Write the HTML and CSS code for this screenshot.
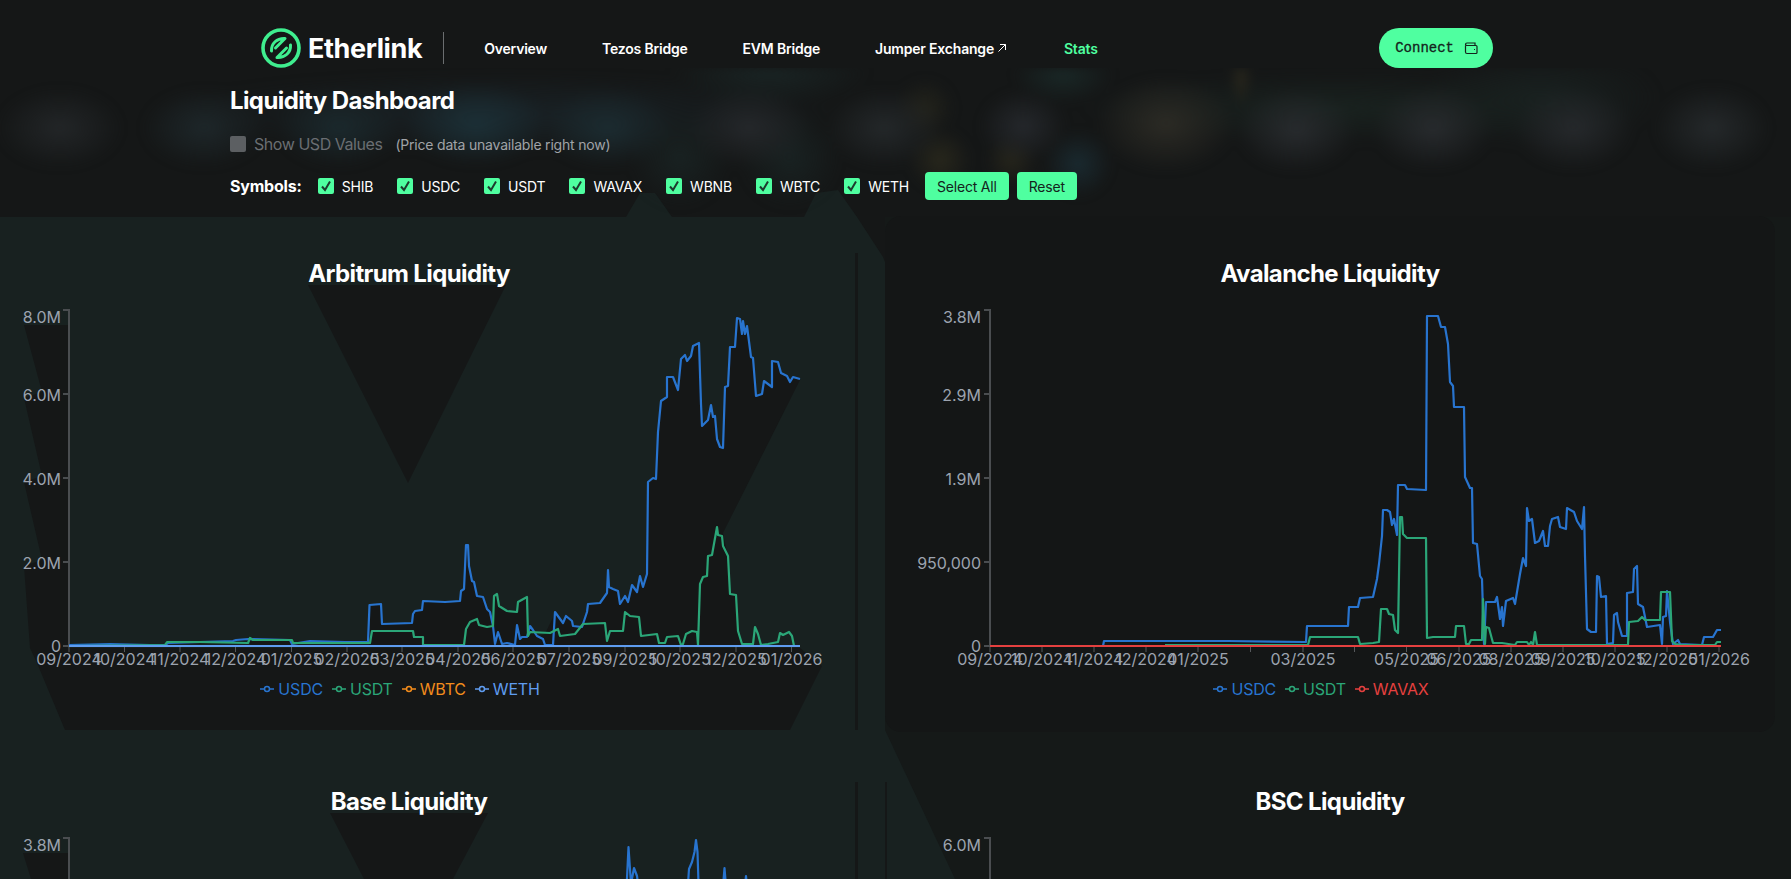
FILE: index.html
```html
<!DOCTYPE html>
<html lang="en">
<head>
<meta charset="utf-8">
<title>Etherlink Liquidity Dashboard</title>
<link rel="stylesheet" href="styles.css">
</head>
<body>
<div class="backdrop">
  <svg class="backdrop-art" viewBox="0 0 1791 879" width="1791" height="879" aria-hidden="true">
    <rect class="lower" x="885" y="217" width="906" height="662"/>
    <polygon class="teal" points="0,217 626,217 640,193 655,193 672,217 804,217 816,193 838,190 857,217 883,257 885,262 885,730 955,879 0,879"/>
    <polygon class="dark" points="308,285 506,285 408,483"/>
    <polygon class="dark" points="330,813 488,813 453,879 364,879"/>
    <polygon class="dark" points="24,325 68,325 68,648 800,648 822,666 790,730 65,730 37,663 30,648 24,566 42,560 24,482 42,476 24,398 42,392"/>
    <polygon class="dark" points="23,853 68,853 68,879 31,879"/>
    <polygon class="dark" points="250,647 250,639 253,641 292,641 293,647"/>
    <polygon class="dark" points="369,647 369.5,606 381,605 382,625 412,624 413,615 415,612 422,611 423,602 445,603 460,602 461,592 464,590 466,546 468,546 469,567 472,582 474,583 477,597 483,598 487,610 490,613 493,627 494,597 497,595 499,607 507,612 517,613 518,603 527,598 528,637 530,627 533,631 537,637 545,634 555,613 563,624 566,617 572,622 573,627 582,628 587,613 588,605 600,604 607,594 608,571 609,588 613,590 618,592 620,605 625,597 628,603 632,586 637,593 640,577 643,588 647,575 648,483 653,479 656,480 658,433 661,402 667,398 667,378 673,378 678,391 681,360 685,356 687,362 691,357 693,347 699,344 701,405 702,427 708,421 711,406 713,418 715,417 717,440 720,448 723,449 725,388 728,387 730,348 735,348 737,319 740,320 742,335 743,322 745,335 747,327 751,358 753,359 756,397 762,395 764,382 772,388 772,362 778,363 781,374 787,377 790,383 793,378 800,380 723,533 728,557 730,595 736,596 738,632 742,647"/>
    <rect class="dark" x="855" y="253" width="3" height="477"/>
    <rect class="dark" x="855" y="782" width="3" height="97"/>
    <rect class="dark" x="885" y="782" width="2" height="97"/>
  </svg>
  <div class="haze"></div>
</div>

<header class="topbar">
  <a class="brand" href="#">
    <svg class="brand-mark" viewBox="0 0 40 40" width="40" height="40" aria-hidden="true">
      <circle cx="20" cy="20" r="18" fill="none" stroke="#3fee8f" stroke-width="3.6"/>
      <path d="M10.5 23 C10 15.5 16 10 24 10.5 L14.5 20" fill="none" stroke="#3fee8f" stroke-width="3" stroke-linecap="round" stroke-linejoin="round"/>
      <path d="M29.5 17 C30 24.5 24 30 16 29.5 L25.5 20" fill="none" stroke="#3fee8f" stroke-width="3" stroke-linecap="round" stroke-linejoin="round"/>
    </svg>
    <span class="brand-name">Etherlink</span>
  </a>
  <span class="divider"></span>
  <nav class="links">
    <a href="#">Overview</a>
    <a href="#">Tezos Bridge</a>
    <a href="#">EVM Bridge</a>
    <a href="#" class="external">Jumper Exchange
      <svg viewBox="0 0 10 10" width="10" height="10" aria-hidden="true"><path d="M1.5 8.5 L8.5 1.5 M3 1.5 H8.5 V7" fill="none" stroke="#fff" stroke-width="1"/></svg>
    </a>
    <a href="#" class="active">Stats</a>
  </nav>
  <button class="connect">Connect
    <svg viewBox="0 0 16 16" width="16" height="16" aria-hidden="true"><path d="M2.5 5.5 V12 A1.5 1.5 0 0 0 4 13.5 H13 A1 1 0 0 0 14 12.5 V6.5 A1 1 0 0 0 13 5.5 H4 A1.5 1.5 0 0 1 2.5 4.5 A1.5 1.5 0 0 1 4 3 H12 V5.5 M11 9.5 H12" fill="none" stroke="#14241c" stroke-width="1.2"/></svg>
  </button>
</header>

<main class="page">
  <section class="intro">
    <h1>Liquidity Dashboard</h1>
    <div class="usd-row">
      <span class="box box-off"></span>
      <span class="usd-label">Show USD Values</span>
      <span class="usd-note">(Price data unavailable right now)</span>
    </div>
    <div class="symbols">
      <strong class="symbols-title">Symbols:</strong>
      <label class="symbol"><span class="box"><svg viewBox="0 0 16 16" width="16" height="16"><path d="M4 8.5 L7 12 L12 3.5"/></svg></span>SHIB</label>
      <label class="symbol"><span class="box"><svg viewBox="0 0 16 16" width="16" height="16"><path d="M4 8.5 L7 12 L12 3.5"/></svg></span>USDC</label>
      <label class="symbol"><span class="box"><svg viewBox="0 0 16 16" width="16" height="16"><path d="M4 8.5 L7 12 L12 3.5"/></svg></span>USDT</label>
      <label class="symbol"><span class="box"><svg viewBox="0 0 16 16" width="16" height="16"><path d="M4 8.5 L7 12 L12 3.5"/></svg></span>WAVAX</label>
      <label class="symbol"><span class="box"><svg viewBox="0 0 16 16" width="16" height="16"><path d="M4 8.5 L7 12 L12 3.5"/></svg></span>WBNB</label>
      <label class="symbol"><span class="box"><svg viewBox="0 0 16 16" width="16" height="16"><path d="M4 8.5 L7 12 L12 3.5"/></svg></span>WBTC</label>
      <label class="symbol"><span class="box"><svg viewBox="0 0 16 16" width="16" height="16"><path d="M4 8.5 L7 12 L12 3.5"/></svg></span>WETH</label>
      <div class="actions">
        <button class="action">Select All</button>
        <button class="action">Reset</button>
      </div>
    </div>
  </section>

  <section class="charts">
    <article class="card">
      <h2>Arbitrum Liquidity</h2>
      <svg class="chart" viewBox="0 300 818 372" width="818" height="372">
        <path class="axis" d="M63 311 H69 V647 M63 395 H69 M63 479 H69 M63 563 H69 M63 647 H69"/>
        <path class="tick" d="M69 647 V653 M124.5 647 V653 M180 647 V653 M235.5 647 V653 M291.5 647 V653 M347 647 V653 M402 647 V653 M458 647 V653 M513 647 V653 M569 647 V653 M625 647 V653 M680 647 V653 M736 647 V653 M791.5 647 V653"/>
        <g class="ylabels">
          <text x="61" y="324">8.0M</text><text x="61" y="401.5">6.0M</text><text x="61" y="485.5">4.0M</text><text x="61" y="569.5">2.0M</text><text x="61" y="653">0</text>
        </g>
        <g class="xlabels">
          <text x="69" y="666">09/2024</text><text x="124.5" y="666">10/2024</text><text x="180" y="666">11/2024</text><text x="235.5" y="666">12/2024</text><text x="291.5" y="666">01/2025</text><text x="347" y="666">02/2025</text><text x="402" y="666">03/2025</text><text x="458" y="666">04/2025</text><text x="513" y="666">06/2025</text><text x="569" y="666">07/2025</text><text x="625" y="666">09/2025</text><text x="680" y="666">10/2025</text><text x="736" y="666">12/2025</text><text x="791.5" y="666">01/2026</text>
        </g>
        <polyline class="series usdc" points="69,646 110,645 150,646 165,646 168,644 200,643 233,642 236,641 248,640 290,641 292,645 310,642 345,643 368,643 369.5,606 381,605 382,625 412,624 413,615 415,612 422,611 423,602 445,603 460,602 461,592 464,590 466,546 468,546 469,567 472,582 474,583 477,597 483,598 487,610 490,613 493,627 495,645 498,633 502,645 507,644 515,646 517,626 520,640 522,638 527,638 530,627 533,631 537,637 543,640 545,646 553,646 555,613 563,624 566,617 572,622 573,627 582,628 587,613 588,605 600,604 607,594 608,571 609,588 613,590 618,592 620,605 625,597 628,603 632,586 637,593 640,577 643,588 647,575 648,483 653,479 656,480 658,433 661,402 667,398 667,378 673,378 678,391 681,360 685,356 687,362 691,357 693,347 699,344 701,405 702,427 708,421 711,406 713,418 715,417 717,440 720,448 723,449 725,388 728,387 730,348 735,348 737,319 740,320 742,335 743,322 745,335 747,327 751,358 753,359 756,397 762,395 764,382 772,388 772,362 778,363 781,374 787,377 790,383 793,378 800,380"/>
        <polyline class="series usdt" points="69,647 165,646 167,643 187,643 200,643 248,644 250,639 253,641 292,641 293,644 370,644 372,632 413,632 414,638 423,638 423,646 464,646 466,630 470,623 477,620 479,626 487,628 493,627 494,597 497,595 499,607 507,612 517,613 518,603 527,598 528,637 530,633 550,634 558,630 560,637 575,635 583,625 605,624 607,642 610,632 623,632 625,613 630,617 639,618 641,637 657,635 659,644 665,644 667,638 678,637 681,646 683,645 686,635 692,632 697,633 698,646 700,585 703,578 707,577 708,557 712,556 717,528 718,536 722,537 723,547 728,557 730,595 736,596 738,632 742,645 753,645 755,628 758,635 761,646 768,645 778,643 780,634 783,636 789,633 792,637 794,647"/>
        <line class="series weth" x1="69" y1="647" x2="800" y2="647"/>
      </svg>
      <ul class="legend">
        <li class="lg-usdc"><svg class="marker" viewBox="0 0 14 8" width="14" height="8"><path d="M0 4 H4.5 M9.5 4 H14"/><circle cx="7" cy="4" r="2.5"/></svg>USDC</li>
        <li class="lg-usdt"><svg class="marker" viewBox="0 0 14 8" width="14" height="8"><path d="M0 4 H4.5 M9.5 4 H14"/><circle cx="7" cy="4" r="2.5"/></svg>USDT</li>
        <li class="lg-wbtc"><svg class="marker" viewBox="0 0 14 8" width="14" height="8"><path d="M0 4 H4.5 M9.5 4 H14"/><circle cx="7" cy="4" r="2.5"/></svg>WBTC</li>
        <li class="lg-weth"><svg class="marker" viewBox="0 0 14 8" width="14" height="8"><path d="M0 4 H4.5 M9.5 4 H14"/><circle cx="7" cy="4" r="2.5"/></svg>WETH</li>
      </ul>
    </article>

    <article class="card card-panel">
      <h2>Avalanche Liquidity</h2>
      <svg class="chart" viewBox="885 300 890 372" width="890" height="372">
        <path class="axis" d="M984 311 H990 V647 M984 395 H990 M984 479 H990 M984 563 H990 M984 647 H990"/>
        <path class="tick" d="M990 647 V653 M1042 647 V653 M1094 647 V653 M1146 647 V653 M1198 647 V653 M1250.5 647 V653 M1303 647 V653 M1354.5 647 V653 M1406.5 647 V653 M1459 647 V653 M1511 647 V653 M1563 647 V653 M1615 647 V653 M1667 647 V653 M1719 647 V653"/>
        <g class="ylabels">
          <text x="981" y="324">3.8M</text><text x="981" y="401.5">2.9M</text><text x="981" y="485.5">1.9M</text><text x="981" y="569.5">950,000</text><text x="981" y="653">0</text>
        </g>
        <g class="xlabels">
          <text x="990" y="666">09/2024</text><text x="1042" y="666">10/2024</text><text x="1094" y="666">11/2024</text><text x="1146" y="666">12/2024</text><text x="1198" y="666">01/2025</text><text x="1303" y="666">03/2025</text><text x="1406.5" y="666">05/2025</text><text x="1459" y="666">06/2025</text><text x="1511" y="666">08/2025</text><text x="1563" y="666">09/2025</text><text x="1615" y="666">10/2025</text><text x="1667" y="666">12/2025</text><text x="1719" y="666">01/2026</text>
        </g>
        <polyline class="series usdc" points="990,647 1103,647 1104,642 1228,642 1306,643 1307,627 1348,627 1349,608 1358,608 1360,599 1373,598 1377,580 1379,565 1382,537 1383,511 1387,511 1390,513 1392,526 1394,520 1397,536 1398,486 1405,486 1407,490 1426,491 1427,317 1438,317 1441,328 1445,328 1448,345 1450,383 1453,387 1454,408 1464,408 1465,478 1470,489 1472,489 1473,544 1477,545 1480,577 1482,580 1484,645 1486,603 1495,603 1497,598 1500,620 1502,608 1503,627 1506,602 1513,599 1515,605 1517,593 1520,575 1523,559 1526,567 1527,509 1529,522 1532,520 1535,544 1539,542 1543,532 1545,547 1548,547 1550,527 1552,520 1558,518 1560,528 1566,530 1567,509 1574,513 1577,522 1582,530 1584,508 1585,557 1587,630 1591,633 1596,633 1597,577 1599,578 1601,598 1606,597 1607,645 1613,644 1614,616 1617,614 1618,623 1622,637 1627,637 1627,594 1633,593 1634,570 1637,567 1638,605 1643,608 1647,628 1660,626 1662,645 1663,618 1666,617 1667,592 1670,623 1673,645 1678,641 1680,645 1702,646 1704,638 1713,638 1717,631 1721,631"/>
        <polyline class="series usdt" points="1165,646 1308,646 1310,638 1358,638 1360,645 1373,644 1379,643 1381,610 1387,610 1389,615 1393,616 1395,631 1398,634 1400,518 1402,518 1403,535 1407,539 1426,539 1427,639 1433,638 1455,638 1456,627 1464,627 1466,645 1469,645 1471,641 1482,641 1483,600 1485,645 1486,628 1489,629 1493,644 1502,644 1515,646 1517,643 1527,643 1529,646 1531,643 1533,646 1535,633 1537,646 1628,646 1629,623 1638,622 1642,618 1645,621 1660,621 1661,593 1670,593 1672,642 1675,645 1682,646 1715,646 1717,643 1721,643"/>
        <line class="series wavax" x1="990" y1="647" x2="1721" y2="647"/>
      </svg>
      <ul class="legend">
        <li class="lg-usdc"><svg class="marker" viewBox="0 0 14 8" width="14" height="8"><path d="M0 4 H4.5 M9.5 4 H14"/><circle cx="7" cy="4" r="2.5"/></svg>USDC</li>
        <li class="lg-usdt"><svg class="marker" viewBox="0 0 14 8" width="14" height="8"><path d="M0 4 H4.5 M9.5 4 H14"/><circle cx="7" cy="4" r="2.5"/></svg>USDT</li>
        <li class="lg-wavax"><svg class="marker" viewBox="0 0 14 8" width="14" height="8"><path d="M0 4 H4.5 M9.5 4 H14"/><circle cx="7" cy="4" r="2.5"/></svg>WAVAX</li>
      </ul>
    </article>

    <article class="card">
      <h2>Base Liquidity</h2>
      <svg class="chart" viewBox="0 828 818 372" width="818" height="372">
        <path class="axis" d="M63 839 H69 V1175"/>
        <g class="ylabels"><text x="61" y="852">3.8M</text></g>
        <polyline class="series usdc" points="626,900 628.5,848 631,885 634,869 637,877 640,900"/>
        <polyline class="series usdc" points="687,900 689,870 692,863 694.5,853 696,841 697.5,853 699,900"/>
        <polyline class="series usdc" points="722,900 724.5,869 727,900"/>
        <polyline class="series usdc" points="744,900 746,877 748,900"/>
      </svg>
    </article>

    <article class="card">
      <h2>BSC Liquidity</h2>
      <svg class="chart" viewBox="885 828 890 372" width="890" height="372">
        <path class="axis" d="M984 839 H990 V1175"/>
        <g class="ylabels"><text x="981" y="852">6.0M</text></g>
      </svg>
    </article>
  </section>
</main>
</body>
</html>
```

FILE: styles.css
```css
* { box-sizing: border-box; }

html, body {
  margin: 0;
  height: 879px;
  overflow: hidden;
}

body {
  position: relative;
  background: #151717;
  color: #fff;
  font-family: Inter, "Liberation Sans", sans-serif;
}

.backdrop {
  position: absolute;
  inset: 0;
  overflow: hidden;
}

.backdrop-art { display: block; }
.backdrop-art .teal { fill: #182120; }
.backdrop-art .dark { fill: #151717; }
.backdrop-art .lower { fill: #151918; }

.haze {
  position: absolute;
  left: 0;
  top: 68px;
  width: 1791px;
  height: 149px;
  filter: blur(5px);
  background:
    radial-gradient(ellipse 62px 40px at 60px 60px, #232628, rgba(35, 38, 40, 0)),
    radial-gradient(ellipse 62px 40px at 204px 60px, #1e272a, rgba(30, 39, 42, 0)),
    radial-gradient(ellipse 62px 40px at 339px 60px, #1b292d, rgba(27, 41, 45, 0)),
    radial-gradient(ellipse 72px 42px at 476px 56px, #1c3037, rgba(28, 48, 55, 0)),
    radial-gradient(ellipse 66px 40px at 608px 60px, #1c2c31, rgba(28, 44, 49, 0)),
    radial-gradient(ellipse 62px 40px at 749px 60px, #25282b, rgba(37, 40, 43, 0)),
    radial-gradient(ellipse 58px 40px at 884px 60px, #24282a, rgba(36, 40, 42, 0)),
    radial-gradient(ellipse 44px 36px at 1023px 58px, #25282c, rgba(37, 40, 44, 0)),
    radial-gradient(ellipse 70px 48px at 1166px 56px, #2c2b25, rgba(44, 43, 37, 0)),
    radial-gradient(ellipse 60px 42px at 1296px 62px, #282b2e, rgba(40, 43, 46, 0)),
    radial-gradient(ellipse 60px 42px at 1433px 60px, #282b2e, rgba(40, 43, 46, 0)),
    radial-gradient(ellipse 60px 42px at 1574px 60px, #26292c, rgba(38, 41, 44, 0)),
    radial-gradient(ellipse 58px 42px at 1712px 60px, #25292b, rgba(37, 41, 43, 0)),
    radial-gradient(circle 32px at 940px 92px, #28271c, rgba(40, 39, 28, 0)),
    radial-gradient(circle 26px at 1011px 92px, #26251b, rgba(38, 37, 27, 0)),
    radial-gradient(circle 34px at 1078px 96px, #1a2a30, rgba(26, 42, 48, 0)),
    radial-gradient(circle 30px at 925px 40px, #23231b, rgba(35, 35, 27, 0)),
    radial-gradient(circle 50px at 680px 90px, #192222, rgba(25, 34, 34, 0)),
    radial-gradient(circle 50px at 790px 90px, #192222, rgba(25, 34, 34, 0)),
    radial-gradient(ellipse 12px 30px at 1241px 10px, #28261c, rgba(40, 38, 28, 0)),
    radial-gradient(ellipse 100px 40px at 770px 0, #1a2525, rgba(26, 37, 37, 0)),
    radial-gradient(ellipse 50px 30px at 1063px 6px, #1a2827, rgba(26, 40, 39, 0)),
    radial-gradient(ellipse 340px 40px at 500px 45px, #192125, rgba(25, 33, 37, 0)),
    radial-gradient(ellipse 260px 36px at 1340px 40px, #19221f, rgba(25, 34, 31, 0)),
    radial-gradient(ellipse 120px 50px at 1540px 30px, #192120, rgba(25, 33, 32, 0));
}

.topbar {
  position: relative;
  z-index: 1;
  display: flex;
  align-items: center;
  height: 68px;
  padding: 28px 298px 0 261px;
  background: #151717;
}

.brand {
  display: flex;
  align-items: center;
  gap: 7px;
  color: #fff;
  text-decoration: none;
}

.brand-mark { display: block; }

.brand-name {
  font-size: 27px;
  font-weight: 700;
  letter-spacing: -0.4px;
}

.divider {
  width: 1px;
  height: 32px;
  margin: 0 40px 0 21px;
  background: #6b6e70;
}

.links {
  display: flex;
  align-items: center;
  gap: 55px;
  font-size: 14px;
  font-weight: 600;
  letter-spacing: -0.2px;
}

.links a {
  color: #fff;
  text-decoration: none;
}

.links .external {
  display: flex;
  align-items: center;
  gap: 3px;
  margin-right: 2px;
}

.links .active { color: #4fffa0; }

.connect {
  display: flex;
  align-items: center;
  gap: 9px;
  height: 40px;
  margin-left: auto;
  padding: 0 14px 0 16px;
  border: 0;
  border-radius: 20px;
  background: #4fffa0;
  color: #14241c;
  font-family: "Liberation Mono", monospace;
  font-size: 14px;
  font-weight: 400;
  -webkit-text-stroke: 0.3px #14241c;
}

.page {
  position: relative;
  z-index: 1;
}

.intro {
  padding: 17px 0 16px 230px;
}

h1 {
  margin: 0;
  font-size: 24px;
  font-weight: 700;
  line-height: 32px;
  letter-spacing: -0.6px;
}

.usd-row {
  display: flex;
  align-items: center;
  height: 24px;
  margin-top: 15px;
}

.box {
  display: block;
  flex: none;
  width: 16px;
  height: 16px;
  border-radius: 2px;
  background: #4fffa0;
}

.box svg {
  display: block;
  fill: none;
  stroke: #1d3a2d;
  stroke-width: 2;
}

.box-off { background: #5c5f62; }

.usd-label {
  margin-left: 8px;
  font-size: 16px;
  letter-spacing: -0.45px;
  color: #6a6e72;
}

.usd-note {
  margin-left: 13px;
  font-size: 14px;
  letter-spacing: -0.2px;
  color: #a0a3a7;
}

.symbols {
  display: flex;
  align-items: center;
  gap: 24px;
  height: 28px;
  margin-top: 16px;
  letter-spacing: -0.2px;
}

.symbols-title {
  margin-right: -8px;
  font-size: 16px;
  font-weight: 700;
}

.symbol {
  display: flex;
  align-items: center;
  gap: 8px;
  font-size: 14px;
  font-weight: 400;
}

.actions {
  display: flex;
  gap: 8px;
  margin-left: -8px;
}

.action {
  height: 28px;
  padding: 0 12px;
  border: 0;
  border-radius: 4px;
  background: #4fffa0;
  color: #14241c;
  font-family: Inter, "Liberation Sans", sans-serif;
  font-size: 14px;
  font-weight: 400;
  letter-spacing: -0.2px;
}

.charts {
  display: grid;
  grid-template-columns: 818px 890px;
  grid-auto-rows: 516px;
  column-gap: 67px;
  row-gap: 12px;
}

.card {
  padding-top: 40px;
  border-radius: 16px;
}

.card-panel { background: #141616; }

h2 {
  margin: 0 0 7px;
  font-size: 24px;
  font-weight: 700;
  line-height: 36px;
  text-align: center;
  letter-spacing: -0.62px;
}

.chart {
  display: block;
  overflow: visible;
}

.chart text {
  font-family: Inter, "Liberation Sans", sans-serif;
  font-size: 16px;
  fill: #9ca3af;
}

.ylabels text { text-anchor: end; }
.xlabels text { text-anchor: middle; }

.axis {
  fill: none;
  stroke: #4a4d50;
  stroke-width: 2;
}

.tick {
  fill: none;
  stroke: #55585b;
  stroke-width: 1;
}

.series {
  fill: none;
  stroke-width: 2.2;
  stroke-linejoin: round;
}

.usdc { stroke: #2874cf; }
.usdt { stroke: #2ba678; }
.weth { stroke: #5f9cf0; }
.wavax { stroke: #e5403f; }

.legend {
  display: flex;
  justify-content: center;
  gap: 9px;
  height: 24px;
  margin: 6px 0 0;
  padding: 0 18px 0 0;
  list-style: none;
  font-size: 16px;
  letter-spacing: -0.2px;
  line-height: 24px;
}

.legend li {
  display: flex;
  align-items: center;
  gap: 4px;
}

.marker {
  fill: none;
  stroke: currentColor;
  stroke-width: 1.5;
}

.lg-usdc { color: #2874cf; }
.lg-usdt { color: #2ba678; }
.lg-wbtc { color: #f28c1c; }
.lg-weth { color: #5f9cf0; }
.lg-wavax { color: #e5403f; }
```
